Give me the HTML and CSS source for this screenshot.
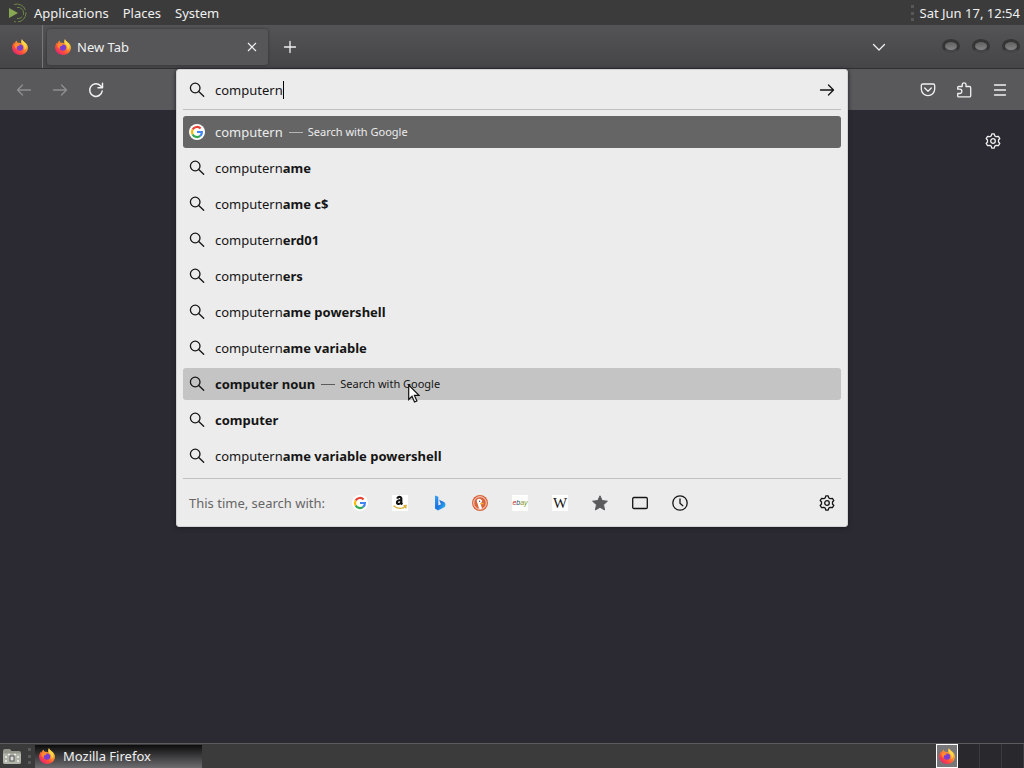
FILE: index.html
```
<!DOCTYPE html>
<html lang="en">
<head>
<meta charset="utf-8">
<title>New Tab</title>
<link rel="stylesheet" href="styles.css">
</head>
<body>
<svg class="defs" aria-hidden="true">
  <defs>
    <linearGradient id="flame" x1="0.85" y1="0.1" x2="0.2" y2="0.9">
      <stop offset="0" stop-color="#ffe14d"/><stop offset="0.35" stop-color="#ff9a2e"/><stop offset="0.7" stop-color="#ff5038"/><stop offset="1" stop-color="#e8286f"/>
    </linearGradient>
    <linearGradient id="bingblue" x1="0" y1="0" x2="1" y2="1">
      <stop offset="0" stop-color="#3aa5f5"/><stop offset="0.5" stop-color="#1b6fe0"/><stop offset="1" stop-color="#35c8ee"/>
    </linearGradient>
    <symbol id="firefox" viewBox="0 0 16 16">
      <path fill="url(#flame)" d="M10 0c.4 1.4 1.300 2 2.400 3C14.800 4.500 16 6.500 15.900 9c-.2 4-3.600 7-7.900 7S.1 12.800.1 8.600C.1 6.500 1 4.600 2.100 3.500l.3 1.200C3 3.300 3.700 2.200 4.700 1.500c0 1 .3 1.800 1.100 2.300C7 3.400 8.400 3.800 9.300 4.600 8.900 3 9 1.300 10 0z"/>
      <circle cx="8" cy="8.600" r="3.200" fill="#7a3fd0"/>
      <path fill="#ff8b2c" d="M2.400 5.500C4 4.300 6 4.500 7.600 6.200c-.6 1-1.800.8-2.500 1.300-.7.500-.5 1.500.3 1.900-1.700.6-3-.8-3-3.900z"/>
      <path fill="#ffd84a" d="M10.100.8c.2 1.700 4.500 3.300 4.200 7-.2 1.800-1 2.700-2 3.300.8-2.200.2-4.200-1.500-5.500C9.700 4.600 9.400 2.500 10.100.8z"/>
    </symbol>
    <symbol id="search" viewBox="0 0 16 16">
      <g fill="none" stroke="currentColor" stroke-width="1.300" stroke-linecap="round"><circle cx="6.200" cy="6" r="4.800"/><path d="M9.700 9.500l5 4.800"/></g>
    </symbol>
    <symbol id="gear" viewBox="0 0 16 16">
      <g fill="none" stroke="currentColor" stroke-width="1.300" stroke-linejoin="round"><path d="M6.900.8h2.200l.7 2.100 1.400.8 2.200-.4 1.400 2.200L13.500 7v2l1.300 1.500-1.400 2.200-2.200-.4-1.400.8-.7 2.100H6.900l-.7-2.100-1.400-.8-2.200.4-1.400-2.200L2.500 9V7L1.200 5.500l1.400-2.200 2.200.4 1.400-.8z"/><circle cx="8" cy="8" r="2.300"/></g>
    </symbol>
    <symbol id="google" viewBox="0 0 16 16">
      <circle cx="8" cy="8" r="8" fill="#fff"/>
      <g fill="none" stroke-width="2.200"><path stroke="#ea4335" d="M3.600 5.600A5 5 0 0 1 11.600 4.500"/><path stroke="#fbbc05" d="M3.600 5.600a5 5 0 0 0 0 4.800"/><path stroke="#34a853" d="M3.600 10.400a5 5 0 0 0 7.600 1.500"/><path stroke="#4285f4" d="M8 8h4.900a5 5 0 0 1-1.700 3.900"/></g>
    </symbol>
  </defs>
</svg>

<header class="panel">
  <svg class="mate" viewBox="0 0 20 20" aria-hidden="true"><path fill="#87a752" d="M1 5l9 5-9 5z"/><g fill="none" stroke="#6d8549"><path d="M6 1.500A9 9 0 1 1 6 18.500" stroke-dasharray="14 2"/><path d="M9 4.500a5.600 5.600 0 1 1 0 11" stroke-dasharray="12 2"/></g></svg>
  <nav class="menus"><button>Applications</button><button>Places</button><button>System</button></nav>
  <span class="grip"></span>
  <time class="clock">Sat Jun 17, 12:54</time>
</header>

<div class="tabbar">
  <button class="pinned" aria-label="Firefox View"><svg class="i16"><use href="#firefox"/></svg></button>
  <div class="tab">
    <svg class="i16"><use href="#firefox"/></svg>
    <span class="tab-title">New Tab</span>
    <button class="close" aria-label="Close tab"><svg viewBox="0 0 10 10"><path d="M1 1l8 8M9 1l-8 8"/></svg></button>
  </div>
  <button class="tool newtab" aria-label="Open a new tab"><svg class="line" viewBox="0 0 16 16"><path d="M8 2.500v11M2.500 8h11"/></svg></button>
  <button class="tool alltabs" aria-label="List all tabs"><svg class="line" viewBox="0 0 16 16"><path d="M2.500 5.500L8 11l5.500-5.500"/></svg></button>
  <div class="winbtns"><button aria-label="Minimize"></button><button aria-label="Maximize"></button><button aria-label="Close"></button></div>
</div>

<div class="toolbar">
  <button class="tool off" aria-label="Back"><svg class="line" viewBox="0 0 16 16"><path d="M14.500 8H1.500M6.500 3L1.500 8l5 5"/></svg></button>
  <button class="tool off" aria-label="Forward"><svg class="line" viewBox="0 0 16 16"><path d="M1.500 8h13M9.500 3l5 5-5 5"/></svg></button>
  <button class="tool" aria-label="Reload"><svg class="line heavy" viewBox="0 0 16 16"><path d="M14.200 9A6.300 6.300 0 1 1 12.500 3.700L14.300 5.500M14.500 1.200v4.600H10"/></svg></button>
  <div class="urlbar">
    <div class="popup">
      <div class="entry">
        <svg class="i16"><use href="#search"/></svg>
        <span class="field"><input type="text" size="9" value="computern" aria-label="Search or enter address"><span class="caret"></span></span>
        <button class="go" aria-label="Go"><svg class="line" viewBox="0 0 16 16"><path d="M1.500 8h13M9.500 3l5 5-5 5"/></svg></button>
      </div>
      <ul class="results">
        <li><button class="row selected"><svg class="i16"><use href="#google"/></svg><span>computern</span><span class="action"><i></i>Search with Google</span></button></li>
        <li><button class="row"><svg class="i16"><use href="#search"/></svg><span>computern<b>ame</b></span></button></li>
        <li><button class="row"><svg class="i16"><use href="#search"/></svg><span>computern<b>ame c$</b></span></button></li>
        <li><button class="row"><svg class="i16"><use href="#search"/></svg><span>computern<b>erd01</b></span></button></li>
        <li><button class="row"><svg class="i16"><use href="#search"/></svg><span>computern<b>ers</b></span></button></li>
        <li><button class="row"><svg class="i16"><use href="#search"/></svg><span>computern<b>ame powershell</b></span></button></li>
        <li><button class="row"><svg class="i16"><use href="#search"/></svg><span>computern<b>ame variable</b></span></button></li>
        <li class="pointed"><button class="row hover"><svg class="i16"><use href="#search"/></svg><span><b>computer noun</b></span><span class="action"><i></i>Search with Google</span></button>
          <svg class="cursor" viewBox="0 0 12 19" aria-hidden="true"><path d="M.7 1v14.500l3.300-3.200 2.500 5.700 2.400-1-2.500-5.600H11z" fill="#fff" stroke="#111" stroke-width="1.200"/></svg></li>
        <li><button class="row"><svg class="i16"><use href="#search"/></svg><span><b>computer</b></span></button></li>
        <li><button class="row"><svg class="i16"><use href="#search"/></svg><span>computern<b>ame variable powershell</b></span></button></li>
      </ul>
      <div class="engines">
        <span class="label">This time, search with:</span>
        <button aria-label="Google"><svg class="i16"><use href="#google"/></svg></button>
        <button aria-label="Amazon"><svg class="i16" viewBox="0 0 16 16"><path fill="#fff" d="M0 0h16v16H0z"/><path fill="none" stroke="#111" stroke-width="2.200" d="M5.200 3.600C5.800 1.300 9.300 1.200 9.300 3.600V7.500q0 1.200 1 2M9.300 5C6.500 5 5 5.800 5 7.400c0 2.200 3.400 2.200 4.300-.4"/><path fill="none" stroke="#d9b13a" stroke-width="1.400" d="M1.500 10.800c3.500 3.300 9 3.300 12 .6M11.500 10.800l2.600-.2-.4 2.800"/></svg></button>
        <button aria-label="Bing"><svg class="i16" viewBox="0 0 16 16"><path fill="url(#bingblue)" d="M3 .5l3.300 1.300v8.800L9 9.200 7.700 6.300 7 4.700l5 2.200c1.800.9 2 4 .4 5.300L6 15.500 3 13.400z"/></svg></button>
        <button aria-label="DuckDuckGo"><svg class="i16" viewBox="0 0 16 16"><circle cx="8" cy="8" r="8" fill="#d9643c"/><circle cx="8" cy="8" r="6.300" fill="none" stroke="#f6e3dc" stroke-width=".9"/><path fill="#fff" d="M5.200 4.500C6.500 3 9.800 3.600 10.200 6.300l-1.500 2.200.3 1.600 1 3.500c-1 .4-2.200.4-3 0L5.600 8.500C4.800 7 4.500 5.500 5.200 4.500z"/><circle cx="7.600" cy="6.200" r=".7" fill="#2d4f8e"/><path stroke="#f3b53c" stroke-width="1.200" d="M8 8.600h3.500"/></svg></button>
        <button aria-label="eBay"><span class="ebay"><span>e</span><span>b</span><span>a</span><span>y</span></span></button>
        <button aria-label="Wikipedia"><span class="wiki">W</span></button>
        <button aria-label="Bookmarks"><svg class="i16" viewBox="0 0 16 16"><path fill="#5b5b5d" stroke="#5b5b5d" stroke-linejoin="round" d="M8 .8l2.200 4.800 5.200.6-3.900 3.500 1.100 5.200L8 12.300l-4.600 2.600 1.100-5.200L.6 6.200l5.200-.6z"/></svg></button>
        <button aria-label="Tabs"><svg class="line" viewBox="0 0 16 16"><rect x=".7" y="2.500" width="14.600" height="11" rx="1.200"/></svg></button>
        <button aria-label="History"><svg class="line" viewBox="0 0 16 16"><circle cx="8" cy="8" r="7.200"/><path d="M8 4v4.300l2.800 2.400"/></svg></button>
        <button class="prefs" aria-label="Change search settings"><svg class="i16"><use href="#gear"/></svg></button>
      </div>
    </div>
  </div>
  <button class="tool" aria-label="Save to Pocket"><svg class="line" viewBox="0 0 16 16"><path d="M2.800 2h10.400q1.500 0 1.500 1.500V7A6.700 6.700 0 0 1 1.300 7V3.500Q1.300 2 2.800 2zM4.700 6L8 9.200 11.300 6"/></svg></button>
  <button class="tool" aria-label="Extensions"><svg class="line" viewBox="0 0 16 16"><path d="M1.700 7V5.500q0-1 1-1h3.500V2.800a1.900 1.900 0 0 1 3.800 0v1.700h3.500q1.200 0 1.200 1.200v8q0 1.200-1.200 1.200H2.700q-1 0-1-1V11.500h2a2 2 0 0 0 0-4.300h-2"/></svg></button>
  <button class="tool" aria-label="Open application menu"><svg class="line" viewBox="0 0 16 16"><path d="M2.500 3h11M2.500 8h11M2.500 13h11"/></svg></button>
</div>

<main class="page"><button class="customize" aria-label="Personalize new tab"><svg class="i16"><use href="#gear"/></svg></button></main>

<footer class="taskbar">
  <button class="desktop" aria-label="Show desktop"><svg viewBox="0 0 20 18"><path fill="#92968a" d="M1 4q0-2 2-2h5l1.500 2H17q2 0 2 2v9q0 2-2 2H3q-2 0-2-2z"/><path fill="#b0b4a8" d="M1 6.500h18v8.500q0 2-2 2H3q-2 0-2-2z"/><rect x="8" y="9" width="4" height="5" fill="#ddd" stroke="#555"/><path d="M4 9v2M4 13v2M16 9v2M16 13v2M6 7.500h2M12 7.500h2" stroke="#eee" stroke-width="1.500"/></svg></button>
  <span class="grip"></span>
  <button class="task"><svg class="i16"><use href="#firefox"/></svg>Mozilla Firefox</button>
  <div class="spaces"><button class="current" aria-label="Workspace 1"><svg class="i16"><use href="#firefox"/></svg></button><button aria-label="Workspace 2"></button><button aria-label="Workspace 3"></button><button aria-label="Workspace 4"></button></div>
</footer>
</body>
</html>
```
FILE: styles.css
```
* { box-sizing: border-box; }
body {
  margin: 0;
  min-height: 100vh;
  display: flex;
  flex-direction: column;
  background: #2b2a33;
  color: #f0f0f0;
  font: 13px/20px "Noto Sans", sans-serif;
}
button {
  display: flex;
  align-items: center;
  justify-content: center;
  border: 0;
  padding: 0;
  background: none;
  color: inherit;
  font: inherit;
}
svg { display: block; flex: none; }
.defs { position: absolute; width: 0; height: 0; }
.i16 { width: 16px; height: 16px; }
.line {
  width: 16px;
  height: 16px;
  fill: none;
  stroke: currentColor;
  stroke-width: 1.3;
  stroke-linecap: round;
  stroke-linejoin: round;
}
.heavy { stroke-width: 1.5; }

.panel {
  display: flex;
  align-items: center;
  height: 25px;
  padding: 0 4px 0 8px;
  background: #3b3b3b;
}
.mate { width: 20px; height: 20px; }
.menus { display: flex; flex: 1; gap: 14px; padding-left: 6px; }
.grip { width: 4px; height: 16px; border-left: 3px dotted #58585a; }
.clock { padding-left: 5px; }

.tabbar {
  display: flex;
  align-items: center;
  height: 44px;
  background: linear-gradient(#545457, #454548);
  border-bottom: 1px solid #2f2f32;
}
.pinned { width: 43px; height: 100%; padding-right: 3px; border-right: 1px solid #77777a; }
.tab {
  display: flex;
  align-items: center;
  width: 221px;
  height: 36px;
  margin-left: 4px;
  padding: 0 8px;
  border-radius: 3px;
  background: #565658;
  box-shadow: 0 0 3px #303032;
}
.tab-title { flex: 1; padding-left: 6px; }
.close { width: 16px; height: 20px; }
.close svg { width: 10px; height: 10px; fill: none; stroke: currentColor; stroke-width: 1.2; }
.tool { width: 36px; height: 36px; }
.newtab { margin-left: 4px; }
.alltabs { margin-left: auto; }
.winbtns { display: flex; gap: 12px; padding: 0 4px 2px 45px; }
.winbtns button {
  width: 18px;
  height: 14px;
  border: 3px solid #353536;
  border-bottom-color: #454547;
  border-radius: 50%;
  background: linear-gradient(#606060, #858585);
}

.toolbar {
  display: flex;
  align-items: center;
  height: 41px;
  padding: 0 6px;
  background: #59595b;
}
.off { color: #8f8f91; }
.urlbar { position: relative; flex: 1; align-self: stretch; margin: 0 62px; }
.popup {
  position: absolute;
  z-index: 2;
  top: 0;
  left: 0;
  right: 0;
  padding: 0 6px;
  border: 1px solid #d2d2d2;
  border-radius: 3px;
  background: #ececec;
  color: #151515;
  box-shadow: 0 1px 4px #1c1b22;
}
.entry {
  display: flex;
  align-items: center;
  height: 40px;
  padding: 0 6px;
  border-bottom: 1px solid #c0c0c0;
}
.field { display: flex; flex: 1; align-items: center; padding-left: 10px; }
.field input {
  field-sizing: content;
  border: 0;
  padding: 0;
  outline: 0;
  background: none;
  color: #151515;
  font: inherit;
}
.caret { width: 1px; height: 18px; background: #000; }
.results { display: grid; gap: 4px; margin: 0; padding: 6px 0; list-style: none; }
.row {
  width: 100%;
  height: 32px;
  justify-content: flex-start;
  padding: 0 6px;
  border-radius: 3px;
  text-align: left;
}
.row > .i16 { margin-right: 10px; }
.selected { background: #656566; color: #ececec; }
.hover { background: #c4c4c4; }
.action { display: flex; align-items: center; font-size: 11px; }
.action i { width: 14px; height: 1px; margin: 0 5px 0 6px; background: currentColor; opacity: .6; }
.pointed { position: relative; }
.cursor { position: absolute; top: 16px; left: 225px; width: 12px; height: 19px; }
.engines {
  display: flex;
  align-items: center;
  height: 48px;
  padding: 0 6px;
  border-top: 1px solid #c0c0c0;
}
.engines button { width: 40px; height: 32px; }
.label { width: 151px; color: #666; white-space: nowrap; }
.engines .prefs { width: 16px; margin-left: auto; }
.ebay {
  width: 16px;
  height: 16px;
  background: #fff;
  font: italic 7px/16px "Liberation Sans", sans-serif;
}
.ebay :nth-child(1) { color: #b82828; }
.ebay :nth-child(2) { color: #1b5468; }
.ebay :nth-child(3) { color: #8a8a20; }
.ebay :nth-child(4) { color: #6b9a10; }
.wiki {
  width: 16px;
  height: 16px;
  background: #fff;
  font: 15px/16px "Liberation Serif", serif;
}

.page { display: flex; flex: 1; justify-content: flex-end; align-items: flex-start; padding: 15px; }
.customize { width: 32px; height: 32px; }

.taskbar {
  display: flex;
  align-items: center;
  height: 25px;
  border-top: 1px solid #5c5c5e;
  background: #3b3b3b;
}
.desktop { width: 24px; }
.desktop svg { width: 20px; height: 18px; }
.taskbar .grip { margin: 0 3px 0 4px; }
.task {
  justify-content: flex-start;
  gap: 8px;
  width: 167px;
  height: 23px;
  padding-left: 4px;
  background: linear-gradient(#0c0c0c, #6d6d70);
}
.spaces { display: flex; height: 100%; margin-left: auto; background: #29282d; }
.spaces button { width: 22px; border-right: 1px solid #3c3c40; }
.spaces .current { border: 1px solid #fff; background: #77777a; }
```
